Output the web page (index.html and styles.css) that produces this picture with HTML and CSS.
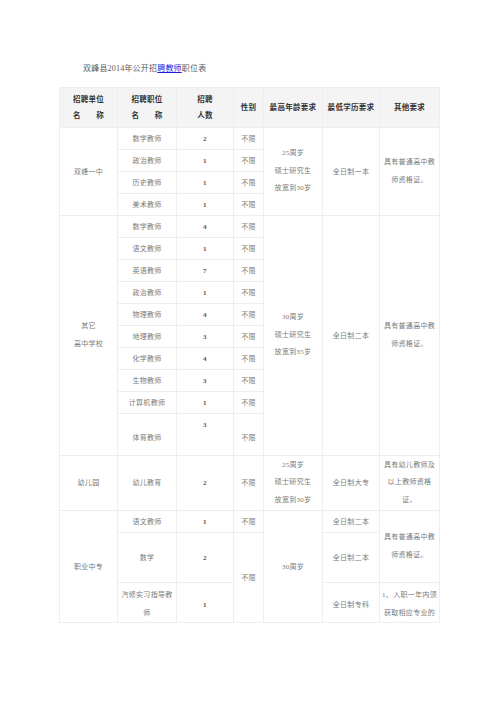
FILE: index.html
```html
<!DOCTYPE html>
<html lang="zh">
<head>
<meta charset="utf-8">
<title>双峰县2014年公开招聘教师职位表</title>
<link rel="stylesheet" href="styles.css">
</head>
<body>
<div class="page">
  <p class="title">双峰县2014年公开招<a class="link" href="#">聘教师</a>职位表</p>
  <table class="jobs">
    <colgroup>
      <col class="c-unit"><col class="c-post"><col class="c-num"><col class="c-sex"><col class="c-age"><col class="c-edu"><col class="c-other">
    </colgroup>
    <thead>
      <tr class="head">
        <th>招聘单位<br>名　　称</th>
        <th>招聘职位<br>名　　称</th>
        <th>招聘<br>人数</th>
        <th>性别</th>
        <th>最高年龄要求</th>
        <th>最低学历要求</th>
        <th>其他要求</th>
      </tr>
    </thead>
    <tbody>
      <tr class="r22">
        <td rowspan="4">双峰一中</td>
        <td>数学教师</td><td class="n">2</td><td>不限</td>
        <td rowspan="4" class="ml">25周岁<br>硕士研究生<br>放宽到30岁</td>
        <td rowspan="4">全日制一本</td>
        <td rowspan="4" class="ml">具有普通高中教<br>师资格证。</td>
      </tr>
      <tr class="r22"><td>政治教师</td><td class="n">1</td><td>不限</td></tr>
      <tr class="r22"><td>历史教师</td><td class="n">1</td><td>不限</td></tr>
      <tr class="r22"><td>美术教师</td><td class="n">1</td><td>不限</td></tr>
      <tr class="r22">
        <td rowspan="10" class="ml">其它<br>高中学校</td>
        <td>数学教师</td><td class="n">4</td><td>不限</td>
        <td rowspan="10" class="ml">30周岁<br>硕士研究生<br>放宽到35岁</td>
        <td rowspan="10">全日制二本</td>
        <td rowspan="10" class="ml">具有普通高中教<br>师资格证。</td>
      </tr>
      <tr class="r22"><td>语文教师</td><td class="n">1</td><td>不限</td></tr>
      <tr class="r22"><td>英语教师</td><td class="n">7</td><td>不限</td></tr>
      <tr class="r22"><td>政治教师</td><td class="n">1</td><td>不限</td></tr>
      <tr class="r22"><td>物理教师</td><td class="n">4</td><td>不限</td></tr>
      <tr class="r22"><td>地理教师</td><td class="n">3</td><td>不限</td></tr>
      <tr class="r22"><td>化学教师</td><td class="n">4</td><td>不限</td></tr>
      <tr class="r22"><td>生物教师</td><td class="n">3</td><td>不限</td></tr>
      <tr class="r22"><td>计算机教师</td><td class="n">1</td><td>不限</td></tr>
      <tr class="r42"><td class="low">体育教师</td><td class="n ml">3<br>&nbsp;</td><td class="low">不限</td></tr>
      <tr class="r55">
        <td>幼儿园</td>
        <td>幼儿教育</td><td class="n">2</td><td>不限</td>
        <td class="ml">25周岁<br>硕士研究生<br>放宽到30岁</td>
        <td>全日制大专</td>
        <td class="ml">具有幼儿教师及<br>以上教师资格<br>证。</td>
      </tr>
      <tr class="r22">
        <td rowspan="3">职业中专</td>
        <td>语文教师</td><td class="n">1</td><td>不限</td>
        <td rowspan="3">30周岁</td>
        <td>全日制二本</td>
        <td rowspan="2" class="ml">具有普通高中教<br>师资格证。</td>
      </tr>
      <tr class="r50"><td>数学</td><td class="n">2</td><td rowspan="2">不限</td><td>全日制二本</td></tr>
      <tr class="r39 last">
        <td class="ml">汽修实习指导教<br>师</td><td class="n">1</td>
        <td>全日制专科</td>
        <td class="ml">1、入职一年内须<br>获取相应专业的</td>
      </tr>
    </tbody>
  </table>
</div>
</body>
</html>
```

FILE: styles.css
```css
html, body {
  margin: 0;
  padding: 0;
  background: #ffffff;
}

body {
  font-family: "Liberation Serif", "Noto Sans CJK SC", serif;
  color: #7a7a7a;
}

.page {
  padding: 63px 0 0 59px;
}

.title {
  margin: 0 0 12px 24px;
  font-size: 8px;
  line-height: 12px;
  letter-spacing: 0.2px;
  color: #5a5a5a;
}

.link {
  color: #2020e0;
  text-decoration: underline;
}

.jobs {
  width: 380px;
  table-layout: fixed;
  border-collapse: collapse;
  border: 1px solid #eeeeee;
  font-size: 7px;
  letter-spacing: 0.3px;
}

.c-unit { width: 58px; }
.c-post { width: 59px; }
.c-num { width: 57px; }
.c-sex { width: 30px; }
.c-age { width: 59px; }
.c-edu { width: 57px; }
.c-other { width: 60px; }

.jobs th,
.jobs td {
  border: 1px solid #eeeeee;
  padding: 0 2px;
  text-align: center;
  vertical-align: middle;
  white-space: nowrap;
  line-height: 12px;
}

.head {
  height: 40px;
  background: #f4f4f4;
}

.head th {
  font-weight: bold;
  color: #333333;
  line-height: 16px;
  font-size: 7.5px;
}

.jobs td.ml {
  line-height: 17.5px;
}

.jobs td.n {
  color: #555555;
  font-weight: bold;
}

.jobs td.low {
  padding-top: 6px;
}

.last td {
  padding-top: 4px;
}

.r22 { height: 22px; }
.r39 { height: 39px; }
.r42 { height: 42px; }
.r50 { height: 50px; }
.r55 { height: 55px; }
```
